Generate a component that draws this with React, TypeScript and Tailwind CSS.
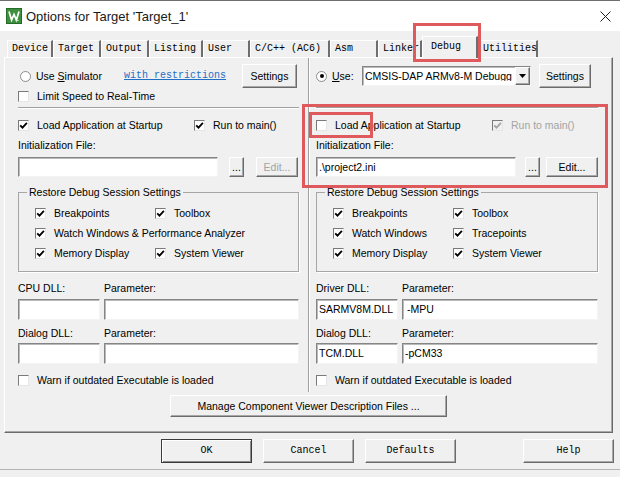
import React from 'react';

// classic Win32 bevels
const raised =
  'border border-t-white border-l-white border-r-[#6b6b6b] border-b-[#6b6b6b] shadow-[inset_-1px_-1px_0_#a8a8a8] bg-[#f0f0f0]';
const sunken =
  'border border-t-[#858585] border-l-[#858585] border-r-[#f4f4f4] border-b-[#f4f4f4] shadow-[inset_1px_1px_0_#b9b9b9] bg-white';

const tabs = [
  { name: 'Device', w: 'w-[46px]' },
  { name: 'Target', w: 'w-[48px]' },
  { name: 'Output', w: 'w-[48px]' },
  { name: 'Listing', w: 'w-[54px]' },
  { name: 'User', w: 'w-[47px]' },
  { name: 'C/C++ (AC6)', w: 'w-[80px]' },
  { name: 'Asm', w: 'w-[48px]' },
  { name: 'Linker', w: 'w-[44px]' },
  { name: 'Debug', w: 'w-[56px]', active: true },
  { name: 'Utilities', w: 'w-[60px]' },
];

const CheckBox = ({ checked, disabled }: { checked?: boolean; disabled?: boolean }) => (
  <span
    className={`flex h-[11px] w-[11px] shrink-0 items-center justify-center border border-t-[#7a7a7a] border-l-[#7a7a7a] border-r-[#e6e6e6] border-b-[#e6e6e6] ${
      disabled ? 'bg-[#f0f0f0]' : 'bg-white'
    }`}
  >
    {checked && (
      <svg viewBox="0 0 9 9" className="h-[9px] w-[9px]">
        <path
          d="M1.2 4.3 L3.5 6.7 L7.9 1.9"
          fill="none"
          stroke={disabled ? '#a3a3a3' : '#000'}
          strokeWidth="1.8"
        />
      </svg>
    )}
  </span>
);

const Check = ({
  label,
  checked,
  disabled,
  className = '',
}: {
  label: string;
  checked?: boolean;
  disabled?: boolean;
  className?: string;
}) => (
  <label className={`flex items-center gap-[8px] whitespace-nowrap ${className}`}>
    <CheckBox checked={checked} disabled={disabled} />
    <span className={disabled ? 'text-[#a3a3a3]' : ''}>{label}</span>
  </label>
);

const Radio = ({ checked }: { checked?: boolean }) => (
  <span className="flex h-[11px] w-[11px] shrink-0 items-center justify-center rounded-full border border-[#8c8c8c] bg-white">
    {checked && <span className="h-[4px] w-[4px] rounded-full bg-black" />}
  </span>
);

const Btn = ({
  children,
  className = '',
  disabled,
}: {
  children: React.ReactNode;
  className?: string;
  disabled?: boolean;
}) => (
  <button
    className={`flex shrink-0 items-center justify-center ${raised} ${
      disabled ? 'text-[#a3a3a3]' : 'text-black'
    } ${className}`}
  >
    {children}
  </button>
);

const Field = ({ value = '', className = '' }: { value?: string; className?: string }) => (
  <div className={`flex items-center overflow-hidden whitespace-nowrap pl-[2px] ${sunken} ${className}`}>
    {value}
  </div>
);

type ColumnProps = {
  hw?: boolean;
};

function DebugColumn({ hw }: ColumnProps) {
  return (
    <div className="flex h-full flex-col">
      {/* driver selection */}
      <div className="mt-[6px] flex h-[24px] items-center">
        {hw ? (
          <>
            <span className="flex w-[46px] items-center gap-[5px]">
              <Radio checked />
              <span>
                <u>U</u>se:
              </span>
            </span>
            <div className={`flex h-[20px] w-[169px] items-center ${sunken}`}>
              <span className="flex-1 overflow-hidden whitespace-nowrap pl-[2px]">
                CMSIS-DAP ARMv8-M Debugg
              </span>
              <span className={`flex h-full w-[15px] items-center justify-center ${raised}`}>
                <svg viewBox="0 0 7 4" className="h-[4px] w-[7px]">
                  <path d="M0 0 H7 L3.5 4 Z" fill="#000" />
                </svg>
              </span>
            </div>
            <Btn className="ml-[8px] h-[24px] w-[52px]">Settings</Btn>
          </>
        ) : (
          <>
            <span className="flex w-[106px] items-center gap-[5px] pl-[2px]">
              <Radio />
              <span>
                Use <u>S</u>imulator
              </span>
            </span>
            <a className="font-['Liberation_Mono',monospace] text-[10px] text-[#1f6fc5] underline">
              with restrictions
            </a>
            <Btn className="ml-auto mr-[2px] h-[24px] w-[55px]">Settings</Btn>
          </>
        )}
      </div>

      <div className="flex h-[16px] items-center">
        {!hw && <Check label="Limit Speed to Real-Time" />}
      </div>

      <div className="mt-[3px] h-[2px] border-t border-b border-t-[#a0a0a0] border-b-white" />

      <div className="mt-[8px] flex h-[16px] items-center">
        <Check label="Load Application at Startup" checked={!hw} className="w-[176px]" />
        <Check label="Run to main()" checked disabled={hw} />
      </div>

      <div className="mt-[5px] flex h-[14px] items-center">Initialization File:</div>

      <div className="mt-[5px] flex h-[20px] items-center">
        <Field value={hw ? '.\\project2.ini' : ''} className="h-[20px] w-[200px]" />
        <Btn className={`h-[20px] w-[15px] ${hw ? 'ml-[9px]' : 'ml-[11px]'}`}>...</Btn>
        {hw ? (
          <Btn className="ml-[6px] h-[20px] w-[52px]">Edit...</Btn>
        ) : (
          <Btn disabled className="ml-[12px] h-[20px] w-[42px]">
            Edit...
          </Btn>
        )}
      </div>

      <fieldset className="mt-[9px] border border-[#a6a6a6] pb-[8px] pl-[8px] shadow-[1px_1px_0_white]">
        <legend className="px-[2px] leading-[13px]">Restore Debug Session Settings</legend>
        <div className="ml-[8px] pt-[4px]">
          <div className="flex h-[20px] items-center">
            <Check label="Breakpoints" checked className="w-[120px]" />
            <Check label="Toolbox" checked />
          </div>
          <div className="flex h-[20px] items-center">
            {hw ? (
              <>
                <Check label="Watch Windows" checked className="w-[120px]" />
                <Check label="Tracepoints" checked />
              </>
            ) : (
              <Check label="Watch Windows & Performance Analyzer" checked />
            )}
          </div>
          <div className="flex h-[20px] items-center">
            <Check label="Memory Display" checked className="w-[120px]" />
            <Check label="System Viewer" checked />
          </div>
        </div>
      </fieldset>

      <div className="mt-[9px] flex h-[14px] items-center">
        <span className="w-[86px]">{hw ? 'Driver DLL:' : 'CPU DLL:'}</span>
        <span>Parameter:</span>
      </div>
      <div className="mt-[4px] flex h-[21px] gap-[4px]">
        <Field value={hw ? 'SARMV8M.DLL' : ''} className="h-[21px] w-[82px]" />
        <Field value={hw ? '-MPU' : ''} className="h-[21px] flex-1 pl-[4px]" />
      </div>

      <div className="mt-[6px] flex h-[14px] items-center">
        <span className="w-[86px]">Dialog DLL:</span>
        <span>Parameter:</span>
      </div>
      <div className="mt-[3px] flex h-[21px] gap-[4px]">
        <Field value={hw ? 'TCM.DLL' : ''} className="h-[21px] w-[82px]" />
        <Field value={hw ? '-pCM33' : ''} className="h-[21px] flex-1" />
      </div>

      <div className="mt-[8px] flex h-[16px] items-center">
        <Check label="Warn if outdated Executable is loaded" />
      </div>
    </div>
  );
}

export default function App() {
  return (
    <div className="relative h-[477px] w-[620px] overflow-hidden bg-[#f0f0f0] font-['Liberation_Sans',Arial,sans-serif] text-[10.5px] leading-none text-black">
      {/* title bar */}
      <div className="flex h-[31px] items-center border-t border-t-[#6e6e6e] bg-white pl-[6px] pr-[9px]">
        <svg viewBox="0 0 16 16" className="h-[16px] w-[16px]">
          <rect x="0.5" y="0.5" width="15" height="15" fill="#3d8f3f" stroke="#256b28" />
          <path d="M3 3.5 L5.6 12 L8 6.5 L10.4 12 L13 3.5" fill="none" stroke="#fff" strokeWidth="1.7" />
          <path d="M9.5 12.5 h3" stroke="#cfe9cf" strokeWidth="1" />
        </svg>
        <span className="ml-[4px] text-[13px] text-[#1a1a1a]">Options for Target 'Target_1'</span>
        <svg viewBox="0 0 11 11" className="ml-auto h-[11px] w-[11px]">
          <path d="M0.5 0.5 L10.5 10.5 M10.5 0.5 L0.5 10.5" stroke="#222" strokeWidth="1" />
        </svg>
      </div>

      {/* tab strip */}
      <div className="flex h-[26px] items-end pl-[7px] font-['Liberation_Mono','Courier_New',monospace] text-[10px]">
        {tabs.map((t) =>
          t.active ? (
            <div
              key={t.name}
              className={`relative z-10 -mb-px flex h-[22px] items-start border-l border-t border-r-2 border-l-white border-t-white border-r-[#6e6e6e] bg-[#f0f0f0] pl-[8px] pt-[5px] ${t.w}`}
            >
              {t.name}
            </div>
          ) : (
            <div
              key={t.name}
              className={`flex h-[17px] items-center border-l border-t border-r-2 border-l-white border-t-white border-r-[#6e6e6e] pl-[4px] ${t.w}`}
            >
              {t.name}
            </div>
          )
        )}
      </div>

      {/* Debug page */}
      <div className="ml-[4px] flex h-[376px] w-[609px] flex-col border border-t-white border-l-white border-r-[#6b6b6b] border-b-[#6b6b6b] shadow-[inset_-1px_-1px_0_#a8a8a8]">
        <div className="flex h-[334px]">
          <div className="w-[305px] border-r border-r-[#a0a0a0] pl-[13px] pr-[9px]">
            <DebugColumn />
          </div>
          <div className="flex-1 border-l border-l-white pl-[6px] pr-[14px]">
            <DebugColumn hw />
          </div>
        </div>
        <div className="mt-[3px] flex justify-center">
          <Btn className="h-[22px] w-[277px]">Manage Component Viewer Description Files ...</Btn>
        </div>
      </div>

      {/* dialog buttons */}
      <div className="ml-[161px] mt-[6px] flex gap-[11px] font-['Liberation_Mono','Courier_New',monospace] text-[10px]">
        <button className="flex h-[24px] w-[91px] items-center justify-center border border-[#3a3a3a] bg-[#f0f0f0] shadow-[inset_1px_1px_0_white,inset_-1px_-1px_0_#8a8a8a]">
          OK
        </button>
        <Btn className="h-[24px] w-[91px]">Cancel</Btn>
        <Btn className="h-[24px] w-[91px]">Defaults</Btn>
        <Btn className="ml-[56px] h-[24px] w-[91px]">Help</Btn>
      </div>
      <div className="mt-[6px] h-px bg-[#b4b4b4]" />

      {/* red highlight frames */}
      <div className="pointer-events-none absolute left-[413px] top-[23px] h-[39px] w-[68px] border-[3px] border-[#df5a5c]" />
      <div className="pointer-events-none absolute left-[302px] top-[104px] h-[84px] w-[306px] border-[3px] border-[#df5a5c]" />
      <div className="pointer-events-none absolute left-[309px] top-[112px] h-[26px] w-[64px] border-[3px] border-[#df5a5c]" />
    </div>
  );
}
